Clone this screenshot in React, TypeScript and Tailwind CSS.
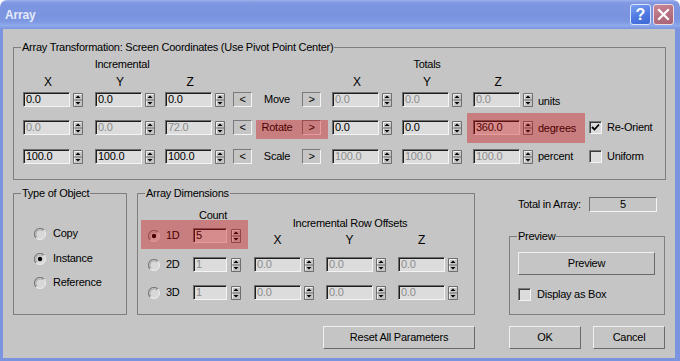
import React from "react";

const BG = "bg-[#c5c5c5]";

function Spinner({ h = 14 }: { h?: number }) {
  return (
    <svg width="10" height={h} viewBox={`0 0 10 ${h}`} className="shrink-0 block">
      <rect x="0" y="0" width="10" height={h} fill="#c5c5c5" />
      <path d={`M0.5 ${h - 0.5}V0.5H9.5`} stroke="#6e6e6e" fill="none" />
      <path d={`M1.5 ${h - 1.5}V1.5H8.5`} stroke="#f2f2f2" fill="none" />
      <path d={`M0.5 ${h - 0.5}H9.5V0.5`} stroke="#6e6e6e" fill="none" />
      <line x1="1" y1={h / 2} x2="9" y2={h / 2} stroke="#6e6e6e" />
      <path d={`M5 2.5L7.5 5H2.5Z`} fill="#000" />
      <path d={`M2.5 ${h - 5}H7.5L5 ${h - 2.5}Z`} fill="#000" />
    </svg>
  );
}

function Field({
  value,
  disabled,
  w = 47,
  center,
}: {
  value: string;
  disabled?: boolean;
  w?: number;
  center?: boolean;
}) {
  return (
    <div
      style={{ width: w }}
      className={
        "h-[15px] shrink-0 bg-[#dcdcdc] border border-t-[#6e6e6e] border-l-[#6e6e6e] border-r-[#f4f4f4] border-b-[#f4f4f4] shadow-[inset_1px_1px_0_#1e1e1e] pl-[2px] leading-[13px] overflow-hidden whitespace-nowrap " +
        (disabled ? "text-[#8c8c8c]" : "text-black") +
        (center ? " text-center" : "")
      }
    >
      {value}
    </div>
  );
}

function Spin({
  value,
  disabled,
  w = 47,
  gap = 3,
  className = "",
}: {
  value: string;
  disabled?: boolean;
  w?: number;
  gap?: number;
  className?: string;
}) {
  return (
    <div className={"flex items-center shrink-0 " + className}>
      <Field value={value} disabled={disabled} w={w} />
      <div style={{ width: gap }} />
      <Spinner />
    </div>
  );
}

function ArrowBtn({ ch, className = "" }: { ch: string; className?: string }) {
  return (
    <div
      className={
        "w-[19px] h-[15px] shrink-0 flex items-center justify-center border border-t-[#7a7a7a] border-l-[#7a7a7a] border-r-[#f4f4f4] border-b-[#f4f4f4] leading-[13px] " +
        className
      }
    >
      {ch}
    </div>
  );
}

function Check({ checked }: { checked?: boolean }) {
  return (
    <div className="w-[13px] h-[13px] shrink-0 bg-[#dcdcdc] border border-t-[#7a7a7a] border-l-[#7a7a7a] border-r-[#f4f4f4] border-b-[#f4f4f4] shadow-[inset_1px_1px_0_#3a3a3a] flex items-center justify-center">
      {checked && (
        <svg width="9" height="9" viewBox="0 0 9 9" className="block">
          <path d="M1 4L3.5 6.5L8 1.5" stroke="#000" strokeWidth="1.8" fill="none" />
        </svg>
      )}
    </div>
  );
}

function Radio({ checked }: { checked?: boolean }) {
  return (
    <svg width="12" height="12" viewBox="0 0 12 12" className="shrink-0 block">
      <circle cx="6" cy="6" r="5.5" fill="#d8d8d8" />
      <path d="M2.1 9.9A5.5 5.5 0 0 1 9.9 2.1" stroke="#7a7a7a" strokeWidth="1.2" fill="none" />
      <path d="M2.9 9.1A4.4 4.4 0 0 1 9.1 2.9" stroke="#a8a8a8" strokeWidth="1" fill="none" />
      <path d="M9.9 2.1A5.5 5.5 0 0 1 2.1 9.9" stroke="#eeeeee" strokeWidth="1" fill="none" />
      {checked && <circle cx="6" cy="6" r="2.2" fill="#000" />}
    </svg>
  );
}

function Button({ children, className = "" }: { children: React.ReactNode; className?: string }) {
  return (
    <div
      className={
        "h-[23px] shrink-0 flex items-center justify-center border border-t-[#f0f0f0] border-l-[#f0f0f0] border-r-[#6a6a6a] border-b-[#6a6a6a] " +
        className
      }
    >
      {children}
    </div>
  );
}

function Group({
  label,
  className = "",
  children,
}: {
  label: string;
  className?: string;
  children?: React.ReactNode;
}) {
  return (
    <div className={"relative shrink-0 border border-[#7e7e7e] " + className}>
      <span className={"absolute left-[7px] -top-[7px] px-[1px] leading-[13px] whitespace-nowrap " + BG}>
        {label}
      </span>
      {children}
    </div>
  );
}

function Overlay({ className }: { className: string }) {
  return <div className={"absolute pointer-events-none bg-[rgba(205,0,0,0.36)] " + className} />;
}

export default function App() {
  return (
    <div className="w-[680px] h-[361px] flex flex-col overflow-hidden font-['Liberation_Sans',Arial,sans-serif] text-[11px] leading-[13px] tracking-[-0.25px] text-black">
      {/* Title bar */}
      <div className="h-[29px] shrink-0 flex items-center rounded-t-[7px] bg-[linear-gradient(180deg,#9bb1ee_0%,#7f97e1_10%,#7a93df_55%,#7e98e2_75%,#8eaaec_88%,#7b94e0_100%)]">
        <span className="ml-[5px] mt-[1px] text-[12px] font-bold tracking-[-0.2px] text-[#e4eaf9] leading-[16px]">
          Array
        </span>
        <div className="ml-auto mr-[6px] flex items-center gap-[2px]">
          <div className="w-[21px] h-[21px] rounded-[3px] border border-[#dbe4fb] bg-[linear-gradient(160deg,#7ea0f0_0%,#4d78e2_55%,#3f69d6_100%)] flex items-center justify-center text-white font-bold text-[16px] leading-[16px] tracking-normal">
            ?
          </div>
          <div className="w-[21px] h-[21px] rounded-[3px] border border-[#ecdbe0] bg-[linear-gradient(160deg,#c88894_0%,#b46f80_55%,#a86476_100%)] flex items-center justify-center">
            <svg width="13" height="13" viewBox="0 0 13 13" className="block">
              <path d="M2 2L11 11M11 2L2 11" stroke="#fff" strokeWidth="2.2" strokeLinecap="square" />
            </svg>
          </div>
        </div>
      </div>

      {/* Body */}
      <div className={"flex-1 flex flex-col border-l-[3px] border-r-[5px] border-b-[3px] border-[#7b94e0] " + BG}>
        {/* Top group */}
        <Group
          label="Array Transformation: Screen Coordinates (Use Pivot Point Center)"
          className="ml-[10px] mt-[18px] w-[653px] h-[133px] flex flex-col"
        >
          <div className="mt-[10px] flex h-[13px]">
            <span className="ml-[9px] w-[198px] text-center">Incremental</span>
            <span className="ml-[111px] w-[190px] text-center">Totals</span>
          </div>
          <div className="mt-[5px] flex h-[13px] text-[12px]">
            <span className="ml-[9px] w-[50px] text-center">X</span>
            <span className="ml-[22px] w-[50px] text-center">Y</span>
            <span className="ml-[20px] w-[50px] text-center">Z</span>
            <span className="ml-[117px] w-[50px] text-center">X</span>
            <span className="ml-[20px] w-[50px] text-center">Y</span>
            <span className="ml-[21px] w-[50px] text-center">Z</span>
          </div>

          {/* Move */}
          <div className="mt-[3px] flex items-center h-[15px]">
            <Spin value="0.0" className="ml-[9px]" />
            <Spin value="0.0" className="ml-[12px]" />
            <Spin value="0.0" className="ml-[10px]" />
            <ArrowBtn ch="<" className="ml-[8px]" />
            <span className="w-[50px] text-center">Move</span>
            <ArrowBtn ch=">" />
            <Spin value="0.0" disabled className="ml-[11px]" />
            <Spin value="0.0" disabled className="ml-[10px]" />
            <Spin value="0.0" disabled className="ml-[11px]" />
            <span className="ml-[5px] w-[51px] mt-[3px]">units</span>
          </div>

          {/* Rotate */}
          <div className="mt-[13px] flex items-center h-[15px]">
            <Spin value="0.0" disabled className="ml-[9px]" />
            <Spin value="0.0" disabled className="ml-[12px]" />
            <Spin value="72.0" disabled className="ml-[10px]" />
            <ArrowBtn ch="<" className="ml-[8px]" />
            <span className="w-[50px] text-center">Rotate</span>
            <ArrowBtn ch=">" />
            <Spin value="0.0" className="ml-[11px]" />
            <Spin value="0.0" className="ml-[10px]" />
            <Spin value="360.0" className="ml-[11px]" />
            <span className="ml-[5px] w-[51px] mt-[1px]">degrees</span>
            <Check checked />
            <span className="ml-[5px]">Re-Orient</span>
          </div>

          {/* Scale */}
          <div className="mt-[14px] flex items-center h-[15px]">
            <Spin value="100.0" className="ml-[9px]" />
            <Spin value="100.0" className="ml-[12px]" />
            <Spin value="100.0" className="ml-[10px]" />
            <ArrowBtn ch="<" className="ml-[8px]" />
            <span className="w-[50px] text-center">Scale</span>
            <ArrowBtn ch=">" />
            <Spin value="100.0" disabled className="ml-[11px]" />
            <Spin value="100.0" disabled className="ml-[10px]" />
            <Spin value="100.0" disabled className="ml-[11px]" />
            <span className="ml-[5px] w-[51px]">percent</span>
            <Check />
            <span className="ml-[5px]">Uniform</span>
          </div>

          <Overlay className="left-[242px] top-[72px] w-[72px] h-[19px]" />
          <Overlay className="left-[453px] top-[65px] w-[118px] h-[30px]" />
        </Group>

        {/* Lower section */}
        <div className="mt-[13px] flex items-start">
          <Group label="Type of Object" className="ml-[10px] w-[114px] h-[122px] flex flex-col">
            <div className="mt-[33px] h-[13px] flex items-center">
              <div className="ml-[20px]">
                <Radio />
              </div>
              <span className="ml-[7px]">Copy</span>
            </div>
            <div className="mt-[12px] h-[13px] flex items-center">
              <div className="ml-[20px]">
                <Radio checked />
              </div>
              <span className="ml-[7px]">Instance</span>
            </div>
            <div className="mt-[11px] h-[13px] flex items-center">
              <div className="ml-[20px]">
                <Radio />
              </div>
              <span className="ml-[7px]">Reference</span>
            </div>
          </Group>

          <Group label="Array Dimensions" className="ml-[10px] w-[338px] h-[122px] flex">
            <div className="ml-[3px] w-[107px] flex flex-col">
              <div className="mt-[15px] h-[13px] flex">
                <span className="ml-[52px] w-[40px] text-center">Count</span>
              </div>
              <div className="mt-[6px] h-[15px] flex items-center">
                <div className="ml-[7px]">
                  <Radio checked />
                </div>
                <span className="ml-[6px] w-[27px]">1D</span>
                <Spin value="5" w={34} gap={4} />
              </div>
              <div className="mt-[14px] h-[15px] flex items-center">
                <div className="ml-[7px]">
                  <Radio />
                </div>
                <span className="ml-[6px] w-[27px]">2D</span>
                <Spin value="1" disabled w={34} gap={4} />
              </div>
              <div className="mt-[13px] h-[15px] flex items-center">
                <div className="ml-[7px]">
                  <Radio />
                </div>
                <span className="ml-[6px] w-[27px]">3D</span>
                <Spin value="1" disabled w={34} gap={4} />
              </div>
            </div>
            <div className="ml-[6px] w-[204px] flex flex-col">
              <div className="mt-[23px] h-[13px] flex">
                <span className="w-[192px] text-center">Incremental Row Offsets</span>
              </div>
              <div className="mt-[4px] h-[13px] flex text-[12px]">
                <span className="w-[47px] text-center">X</span>
                <span className="ml-[25px] w-[47px] text-center">Y</span>
                <span className="ml-[25px] w-[47px] text-center">Z</span>
              </div>
              <div className="mt-[10px] h-[15px] flex items-center">
                <Spin value="0.0" disabled />
                <Spin value="0.0" disabled className="ml-[12px]" />
                <Spin value="0.0" disabled className="ml-[12px]" />
              </div>
              <div className="mt-[13px] h-[15px] flex items-center">
                <Spin value="0.0" disabled />
                <Spin value="0.0" disabled className="ml-[12px]" />
                <Spin value="0.0" disabled className="ml-[12px]" />
              </div>
            </div>
            <Overlay className="left-[3px] top-[26px] w-[107px] h-[29px]" />
          </Group>

          <div className="ml-[34px] w-[156px] flex flex-col shrink-0">
            <div className="mt-[4px] h-[15px] flex items-center">
              <span className="ml-[9px] w-[71px]">Total in Array:</span>
              <div className="w-[68px] h-[15px] border border-t-[#6e6e6e] border-l-[#6e6e6e] border-r-[#f4f4f4] border-b-[#f4f4f4] text-center leading-[13px]">
                5
              </div>
            </div>
            <Group label="Preview" className="mt-[24px] w-[156px] h-[79px] flex flex-col">
              <Button className="mt-[15px] ml-[8px] w-[137px]">Preview</Button>
              <div className="mt-[13px] ml-[8px] h-[13px] flex items-center">
                <Check />
                <span className="ml-[6px]">Display as Box</span>
              </div>
            </Group>
          </div>
        </div>

        {/* Bottom buttons */}
        <div className="mt-[11px] flex">
          <Button className="ml-[320px] w-[152px]">Reset All Parameters</Button>
          <Button className="ml-[34px] w-[72px]">OK</Button>
          <Button className="ml-[12px] w-[72px]">Cancel</Button>
        </div>
      </div>
    </div>
  );
}
